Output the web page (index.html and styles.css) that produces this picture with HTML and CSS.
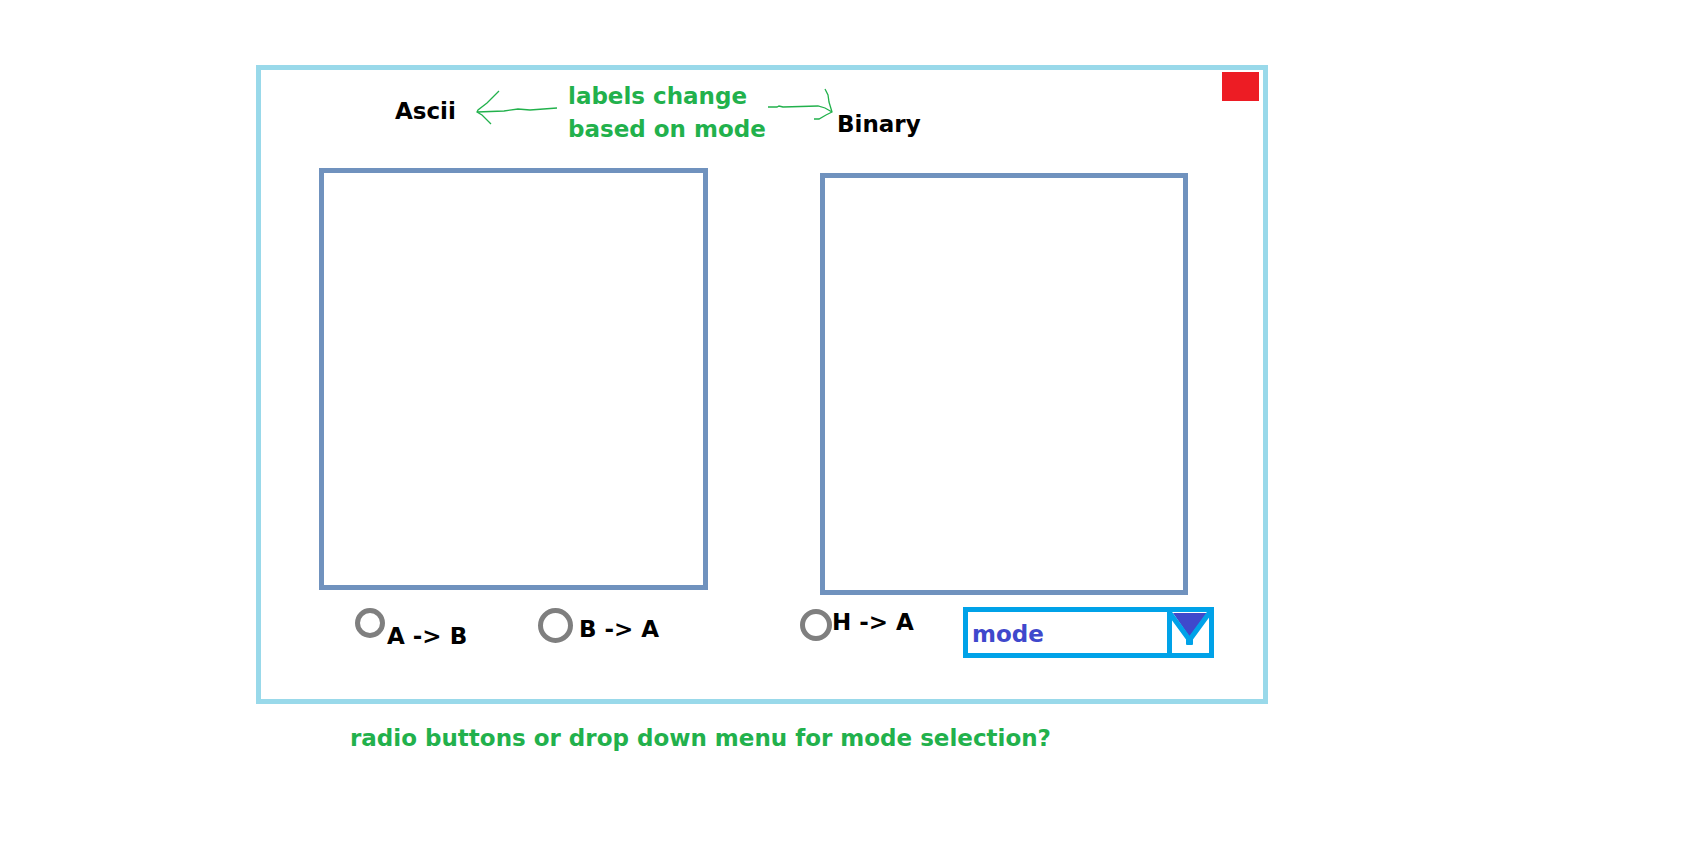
FILE: index.html
```html
<!DOCTYPE html>
<html lang="en">
<head>
<meta charset="utf-8">
<title>Ascii / Binary converter</title>
<link rel="stylesheet" href="styles.css">
</head>
<body>
<main class="page">
  <form class="window">
    <header class="header">
      <label class="title" for="source">Ascii</label>
      <svg class="arrow" width="84" height="40" viewBox="0 0 84 40" aria-hidden="true">
        <path d="M1 22 L28 21 L42 19 L54 20 L81 18 M23 1 L16 8 L11 13 L2 20 L1 22 L6 25 L15 34"/>
      </svg>
      <p class="note">labels change<br>based on mode</p>
      <svg class="arrow" width="66" height="40" viewBox="0 0 66 40" aria-hidden="true">
        <path d="M0 17 L9 17 L11 16 L15 17 L50 16 L57 18 L64 22 M57 -1 L60 5 L61 12 L64 22 L58 25 L51 29 L46 29"/>
      </svg>
      <label class="title title-low" for="result">Binary</label>
      <button class="close" type="button" aria-label="Close"></button>
    </header>
    <div class="panes">
      <textarea class="pane" id="source"></textarea>
      <textarea class="pane pane-result" id="result"></textarea>
    </div>
    <div class="controls">
      <div class="option">
        <input class="radio" type="radio" name="direction" id="ab">
        <label class="option-low" for="ab">A -&gt; B</label>
      </div>
      <div class="option option-wide">
        <input class="radio radio-large" type="radio" name="direction" id="ba">
        <label class="option-mid" for="ba">B -&gt; A</label>
      </div>
      <div class="option option-tight">
        <input class="radio radio-medium" type="radio" name="direction" id="ha">
        <label for="ha">H -&gt; A</label>
      </div>
      <div class="dropdown">
        <select class="select" aria-label="mode"><option>mode</option></select>
        <svg class="chevron" width="47" height="51" viewBox="0 0 47 51" aria-hidden="true">
          <path class="chevron-line" d="M2.500 0V51"/>
          <path class="chevron-fill" d="M6 6H40L22.500 30Z"/>
          <path class="chevron-line" d="M2 5L22.500 33L43 5"/>
          <rect class="chevron-tip" x="19" y="30" width="7" height="8" rx="1"/>
        </svg>
      </div>
    </div>
  </form>
  <p class="note question">radio buttons or drop down menu for mode selection?</p>
</main>
</body>
</html>
```
FILE: styles.css
```css
* { box-sizing: border-box; }
body {
  margin: 0;
  background: #fff;
  color: #000;
  font: 900 23px/33px "DejaVu Sans", sans-serif;
}
.page { padding: 65px 426px 40px 256px; }
.window { position: relative; border: 5px solid #99d9ea; }
.header {
  display: grid;
  grid-template-columns: 81px 92px 200px 69px 1fr;
  align-items: start;
  min-height: 98px;
  padding: 10px 0 0 134px;
}
.title { margin-top: 15px; white-space: nowrap; }
.title-low { margin-top: 28px; }
.note { margin: 0; color: #22b14c; white-space: nowrap; }
.arrow {
  margin-top: 10px;
  fill: none;
  stroke: #22b14c;
  stroke-width: 1.3;
  overflow: visible;
}
.close {
  position: absolute;
  top: 2px;
  right: 4px;
  width: 37px;
  height: 29px;
  padding: 0;
  border: 0;
  background: #ed1c24;
}
.panes {
  display: grid;
  grid-template-columns: 389fr 368fr;
  gap: 112px;
  padding: 0 75px 0 58px;
}
.pane {
  display: block;
  width: 100%;
  height: 422px;
  margin: 0;
  padding: 8px;
  border: 5px solid #7092be;
  border-radius: 0;
  outline: 0;
  background: #fff;
  font: inherit;
  resize: none;
}
.pane-result { margin-top: 5px; }
.controls {
  display: grid;
  grid-template-columns: 183fr 262fr 163fr 251fr;
  align-items: start;
  padding: 11px 49px 41px 94px;
}
.option {
  display: flex;
  align-items: flex-start;
  gap: 2px;
  white-space: nowrap;
}
.option-wide { gap: 6px; }
.option-tight { gap: 0; }
.option-low { margin-top: 14px; }
.option-mid { margin-top: 7px; }
.radio {
  flex: none;
  appearance: none;
  width: 30px;
  height: 30px;
  margin: 2px 0 0;
  border: 5px solid #7f7f7f;
  border-radius: 50%;
  background: #fff;
}
.radio:checked { background: #3f48cc; }
.radio-large { width: 35px; height: 35px; }
.radio-medium { width: 32px; height: 32px; margin-top: 3px; }
.dropdown { position: relative; margin-top: 1px; }
.select {
  display: block;
  appearance: none;
  width: 100%;
  height: 51px;
  padding: 3px 52px 0 4px;
  border: 5px solid #00a2e8;
  border-radius: 0;
  background: #fff;
  color: #3f48cc;
  font: inherit;
}
.chevron { position: absolute; top: 0; right: 0; pointer-events: none; }
.chevron-line { fill: none; stroke: #00a2e8; stroke-width: 5; }
.chevron-fill { fill: #3f48cc; }
.chevron-tip { fill: #00a2e8; }
.question { padding: 18px 0 0 94px; }
```
